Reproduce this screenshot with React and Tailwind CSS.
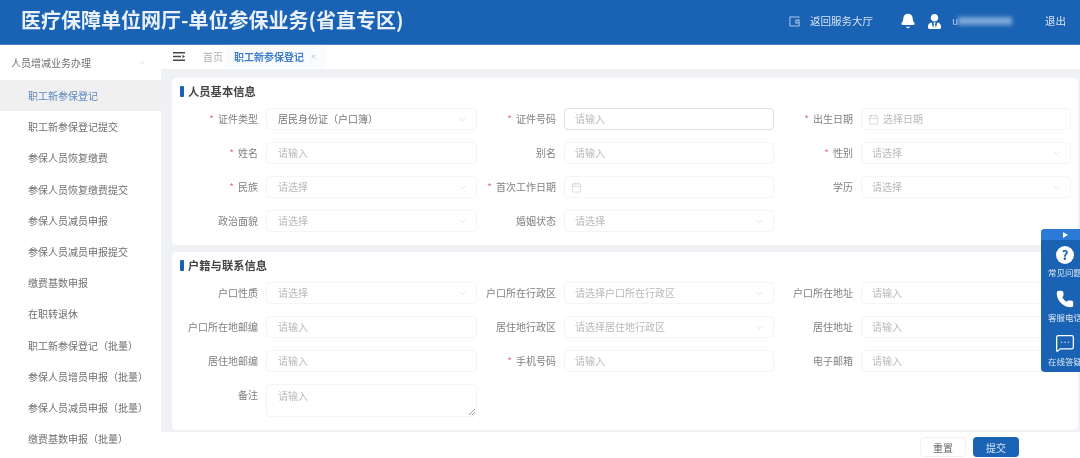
import { Bell, Calendar, ChevronDown, ChevronUp, MessageSquareMore, Phone, X } from 'lucide-react';
import { FaUserTie } from 'react-icons/fa';

const menuItems = [
  '职工新参保登记',
  '职工新参保登记提交',
  '参保人员恢复缴费',
  '参保人员恢复缴费提交',
  '参保人员减员申报',
  '参保人员减员申报提交',
  '缴费基数申报',
  '在职转退休',
  '职工新参保登记（批量）',
  '参保人员增员申报（批量）',
  '参保人员减员申报（批量）',
  '缴费基数申报（批量）',
];

const basicFields = [
  { label: '证件类型', required: true, type: 'select', value: '居民身份证（户口簿）' },
  { label: '证件号码', required: true, type: 'input', focused: true },
  { label: '出生日期', required: true, type: 'date', placeholder: '选择日期' },
  { label: '姓名', required: true, type: 'input' },
  { label: '别名', type: 'input' },
  { label: '性别', required: true, type: 'select' },
  { label: '民族', required: true, type: 'select' },
  { label: '首次工作日期', required: true, type: 'date' },
  { label: '学历', type: 'select' },
  { label: '政治面貌', type: 'select' },
  { label: '婚姻状态', type: 'select' },
];

const contactFields = [
  { label: '户口性质', type: 'select' },
  { label: '户口所在行政区', type: 'select', placeholder: '请选择户口所在行政区' },
  { label: '户口所在地址', type: 'input' },
  { label: '户口所在地邮编', type: 'input' },
  { label: '居住地行政区', type: 'select', placeholder: '请选择居住地行政区' },
  { label: '居住地址', type: 'input' },
  { label: '居住地邮编', type: 'input' },
  { label: '手机号码', required: true, type: 'input' },
  { label: '电子邮箱', type: 'input' },
];

const Field = ({ field, firstColumn }) => {
  const { label, required, type, value, placeholder, focused } = field;
  const text = value || placeholder || (type === 'select' ? '请选择' : type === 'input' ? '请输入' : '');
  const padding = type === 'date' ? 'pl-[6px]' : firstColumn ? 'pl-[11px]' : 'pl-[10px]';

  return (
    <div className="flex items-center h-[22px]">
      <label className="w-[78px] shrink-0 mr-2 pb-[2px] text-right text-[10px] text-[#808080] whitespace-nowrap">
        {required && <span className="text-[#e57373] mr-1">*</span>}
        {label}
      </label>
      <div
        className={`${firstColumn ? 'w-[211px]' : 'w-[210px]'} h-[22px] flex items-center rounded-sm bg-white border ${
          focused ? 'border-[#dcdfe4]' : 'border-[#f4f5f6]'
        } ${padding} pr-2`}
      >
        {type === 'date' && <Calendar size={11} strokeWidth={1} className="text-[#b5b5b5] mr-1 shrink-0" />}
        <span className={`flex-1 pb-[1px] text-[10px] ${value ? 'text-[#777]' : 'text-[#b8b8b8]'}`}>{text}</span>
        {type === 'select' && <ChevronDown size={11} strokeWidth={1} className="text-[#c4c4c4]" />}
      </div>
    </div>
  );
};

const SectionTitle = ({ children }) => (
  <div className="h-[30px] pl-2 pb-[4px] flex items-center gap-[4px]">
    <span className="w-[4px] h-[11px] bg-[#1c62b4] rounded-[1px]"></span>
    <h2 className="text-[11.3px] font-bold text-[#444]">{children}</h2>
  </div>
);

const fieldGrid = 'grid grid-cols-[298px_297px_297px] gap-y-3 pl-2';

const App = () => {
  return (
    <div className="relative w-[1080px] h-[458px] overflow-hidden bg-white flex flex-col blur-[0.4px] font-['Noto_Sans_CJK_SC','Liberation_Sans',sans-serif]">
      <header className="h-[45px] shrink-0 bg-[#1a62b3] border-b border-[#4d86c6] flex items-center pl-[21px] pr-[14px] text-[#d5e3f3]">
        <h1 className="pb-[4px] text-[20px] font-bold text-[#eaf1f9] leading-none">医疗保障单位网厅-单位参保业务(省直专区)</h1>
        <div className="ml-auto pb-[2px] flex items-center text-[10.5px]">
          <svg width="11" height="11" viewBox="0 0 12 12" fill="none" stroke="#a9c6e8" strokeWidth="1.1" className="mr-[10px]">
            <path d="M11 2V1H1v10h10V8" />
            <path d="M7.5 4.5h3.5v3H7.5z" />
          </svg>
          <span>返回服务大厅</span>
          <Bell size={16} fill="#ffffff" className="text-white ml-[27px]" />
          <FaUserTie size={15} className="text-white ml-[11px]" />
          <span className="ml-[10px] w-[6px] text-[#a8c5e6]">u</span>
          <span className="w-[54px] h-[8px] bg-[#7fa9d8] blur-[2px]"></span>
          <span className="ml-[33px]">退出</span>
        </div>
      </header>

      <div className="flex-1 flex min-h-0">
        <aside className="w-[161px] shrink-0 bg-white">
          <div className="h-[35px] pl-[11px] pr-[14px] flex items-center justify-between text-[10px] text-[#707070]">
            人员增减业务办理
            <ChevronUp size={10} strokeWidth={1} className="text-[#aaa]" />
          </div>
          {menuItems.map((item, i) => (
            <div
              key={item}
              className={`h-[31.2px] pl-[28px] flex items-center text-[10px] whitespace-nowrap ${
                i === 0 ? 'bg-[#f0f0f0] text-[#5a87c0]' : 'text-[#6f6f6f]'
              }`}
            >
              {item}
            </div>
          ))}
        </aside>

        <main className="flex-1 min-w-0 flex flex-col">
          <div className="h-[24px] shrink-0 pb-[1px] flex items-center text-[10px] bg-white">
            <svg width="12" height="9" viewBox="0 0 12 9" className="ml-[12px]" fill="#444">
              <path d="M0 0h12v1.4H0zM0 3.8h8v1.4H0zM0 7.6h12V9H0zM9.5 2.8L12 4.5 9.5 6.2z" />
            </svg>
            <span className="ml-[18px] text-[#b0b0b0]">首页</span>
            <div className="ml-[2px] h-full px-[9px] flex items-center bg-[#fafbfc]">
              <span className="font-bold text-[#3f7fd0]">职工新参保登记</span>
              <X size={7} className="ml-[6px] text-[#aaa]" />
            </div>
          </div>

          <div className="bg-[#eff1f4] pt-[9px] pb-[2px] pl-[11px] pr-[2px] flex flex-col gap-[7px]">
            <section className="bg-white rounded-sm h-[167px]">
              <SectionTitle>人员基本信息</SectionTitle>
              <div className={fieldGrid}>
                {basicFields.map((field, i) => (
                  <Field key={field.label} field={field} firstColumn={i % 3 === 0} />
                ))}
              </div>
            </section>

            <section className="bg-white rounded-sm h-[178px]">
              <SectionTitle>户籍与联系信息</SectionTitle>
              <div className={fieldGrid}>
                {contactFields.map((field, i) => (
                  <Field key={field.label} field={field} firstColumn={i % 3 === 0} />
                ))}
              </div>
              <div className="flex pl-2 mt-3">
                <label className="w-[78px] mr-2 pt-[3px] text-right text-[10px] text-[#808080]">备注</label>
                <div className="relative w-[211px] h-[33px] rounded-sm border border-[#f4f5f6] pl-[11px] pt-[3px] text-[10px] text-[#b8b8b8]">
                  请输入
                  <svg width="6" height="6" viewBox="0 0 6 6" className="absolute right-[1px] bottom-[1px]" stroke="#888" strokeWidth="0.8">
                    <path d="M0 6L6 0M3 6L6 3" />
                  </svg>
                </div>
              </div>
            </section>
          </div>

          <div className="flex-1 flex justify-end items-start gap-[7px] pt-[5px] pr-[61px] text-[10px]">
            <button className="w-[46px] h-[20px] bg-white border border-[#f0f0f0] rounded-sm text-[#666]">重置</button>
            <button className="w-[46px] h-[20px] bg-[#1b63b5] rounded-sm text-[#d5e3f3]">提交</button>
          </div>
        </main>
      </div>

      {/* floating help panel, runs off the right edge like in the page */}
      <div className="absolute top-[229px] left-[1041px] w-[48px] h-[143px] bg-[#1a62b3] rounded-l-sm text-[8.5px] text-[#dbe7f5] flex flex-col items-center">
        <div className="w-full h-[11px] bg-[#2a7ad6] rounded-tl-sm flex items-center justify-center">
          <span className="border-y-[3px] border-y-transparent border-l-[5px] border-l-white"></span>
        </div>
        <div className="h-[45px] flex flex-col items-center justify-center gap-[2px] whitespace-nowrap">
          <span className="w-[18px] h-[18px] rounded-full bg-white text-[#1a62b3] text-[13px] font-bold leading-[18px] text-center">?</span>
          常见问题
        </div>
        <div className="h-[43px] flex flex-col items-center justify-center gap-[3px] whitespace-nowrap">
          <Phone size={18} fill="#ffffff" className="text-white" />
          客服电话
        </div>
        <div className="h-[44px] flex flex-col items-center justify-center gap-[2px] whitespace-nowrap">
          <MessageSquareMore size={20} strokeWidth={1.5} className="text-white" />
          在线答疑
        </div>
      </div>
    </div>
  );
};

export default App;
